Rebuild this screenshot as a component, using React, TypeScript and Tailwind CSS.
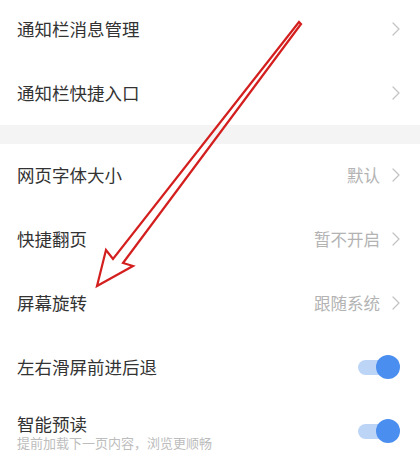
import React from 'react';

const font = { fontFamily: '"Noto Sans CJK SC", "Noto Sans", sans-serif' };

const Chevron = () => (
  <svg width="8" height="14" viewBox="0 0 8 14" className="shrink-0">
    <path d="M1 1 L7 7 L1 13" fill="none" stroke="#c4c4c4" strokeWidth="1.3" strokeLinecap="round" strokeLinejoin="round" />
  </svg>
);

const Toggle = () => (
  <div className="relative w-[42px] h-[24px] shrink-0">
    <div className="absolute left-0 top-[4.5px] w-[34px] h-[15px] rounded-full bg-[#bcd5f7]" />
    <div className="absolute right-0 top-0 w-[24px] h-[24px] rounded-full bg-[#4a8ef0]" />
  </div>
);

interface RowProps {
  title: string;
  value?: string;
  sub?: string;
  toggle?: boolean;
  chevron?: boolean;
}

const Row: React.FC<RowProps> = ({ title, value, sub, toggle, chevron }) => (
  <div className="h-[64px] flex items-center justify-between pl-[17px] pr-[20px]">
    <div className="flex flex-col">
      <span className={`text-[17.5px] text-[#333] ${sub ? 'leading-[21px]' : 'leading-[24px]'}`}>{title}</span>
      {sub && <span className="text-[13px] leading-[15px] text-[#bdbdbd] mt-[1px]">{sub}</span>}
    </div>
    <div className="flex items-center gap-[12px]">
      {value && <span className="text-[16.5px] text-[#b3b3b3]">{value}</span>}
      {chevron && <Chevron />}
      {toggle && <Toggle />}
    </div>
  </div>
);

export default function App() {
  return (
    <div className="relative w-[420px] h-[468px] bg-white overflow-hidden" style={font}>
      <div className="flex flex-col -mt-[3px]">
        <Row title="通知栏消息管理" chevron />
        <Row title="通知栏快捷入口" chevron />
        <div className="h-[19px] bg-[#f4f4f4] mt-[-0px]" />
        <div className="-mt-[1px]">
          <Row title="网页字体大小" value="默认" chevron />
          <Row title="快捷翻页" value="暂不开启" chevron />
          <Row title="屏幕旋转" value="跟随系统" chevron />
          <Row title="左右滑屏前进后退" toggle />
          <Row title="智能预读" sub="提前加载下一页内容，浏览更顺畅" toggle />
        </div>
      </div>
      {/* annotation arrow */}
      <svg className="absolute inset-0 pointer-events-none" width="420" height="468" viewBox="0 0 420 468">
        <path
          d="M299 22 L113 259 L106 250 L97 286 L133 266 L123 263 L301 24 Z"
          fill="none"
          stroke="#d41f1f"
          strokeWidth="2.2"
          strokeLinejoin="miter"
        />
      </svg>
    </div>
  );
}
